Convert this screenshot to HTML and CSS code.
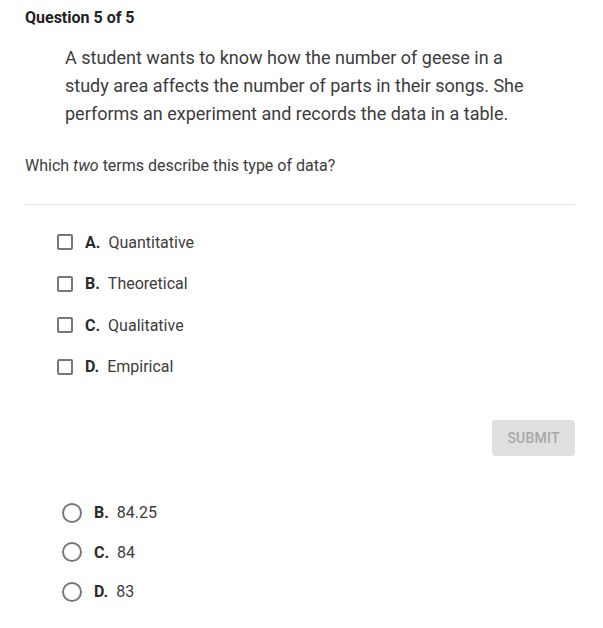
FILE: index.html
```html
<!DOCTYPE html>
<html>
<head>
<meta charset="utf-8">
<link rel="stylesheet" href="styles.css">
</head>
<body>
<div class="page">
  <h1 class="title">Question 5 of 5</h1>
  <p class="passage">A student wants to know how the number of geese in a study area affects the number of parts in their songs. She performs an experiment and records the data in a table.</p>
  <p class="prompt">Which <em>two</em> terms describe this type of data?</p>
  <hr class="divider">
  <ul class="choices">
    <li class="choice"><span class="box"></span><b class="letter">A.</b><span class="text">Quantitative</span></li>
    <li class="choice"><span class="box"></span><b class="letter">B.</b><span class="text">Theoretical</span></li>
    <li class="choice"><span class="box"></span><b class="letter">C.</b><span class="text">Qualitative</span></li>
    <li class="choice"><span class="box"></span><b class="letter">D.</b><span class="text">Empirical</span></li>
  </ul>
  <div class="actions"><button class="submit">SUBMIT</button></div>
  <ul class="radios">
    <li class="radio-choice"><span class="circle"></span><b class="letter">B.</b><span class="text">84.25</span></li>
    <li class="radio-choice"><span class="circle"></span><b class="letter">C.</b><span class="text">84</span></li>
    <li class="radio-choice"><span class="circle"></span><b class="letter">D.</b><span class="text">83</span></li>
  </ul>
</div>
</body>
</html>
```
FILE: styles.css
```css
html, body { margin: 0; padding: 0; background: #fff; }
body { font-family: Roboto, "Noto Sans", sans-serif; color: #3a3a3a; }
.page { padding: 8px 28px 0 25px; }
.title { margin: 0; font-size: 16px; font-weight: 700; color: #222; line-height: 20px; }
.passage { margin: 16px 0 0 40px; font-size: 18px; line-height: 28px; color: #3c3c3c; width: 480px; }
.prompt { margin: 28px 0 0 0; font-size: 16px; line-height: 20px; color: #3c3c3c; }
.prompt em { font-style: italic; }
.divider { border: 0; border-top: 1px solid #e3e3e3; margin: 28px 0 0 0; }
.choices { list-style: none; margin: 27px 0 0 32px; padding: 0; display: flex; flex-direction: column; gap: 21.5px; }
.choice { display: flex; align-items: center; height: 20px; font-size: 16px; }
.box { width: 12px; height: 12px; border: 2px solid #777; border-radius: 2px; margin-right: 12px; flex: none; }
.letter { font-weight: 700; color: #2a2a2a; margin-right: 8px; font-size: 16px; }
.text { color: #3c3c3c; }
.actions { display: flex; justify-content: flex-end; margin-top: 43px; }
.submit { width: 83px; height: 36px; border: 0; border-radius: 4px; background: #e0e0e0; color: #a8a8a8; font-family: Roboto, sans-serif; font-size: 14px; font-weight: 500; letter-spacing: 0.2px; padding: 0; }
.radios { list-style: none; margin: 47px 0 0 37px; padding: 0; display: flex; flex-direction: column; gap: 19.5px; }
.radio-choice { display: flex; align-items: center; height: 20px; font-size: 16px; }
.circle { width: 16px; height: 16px; border: 2px solid #777; border-radius: 50%; margin-right: 12px; flex: none; }
```
